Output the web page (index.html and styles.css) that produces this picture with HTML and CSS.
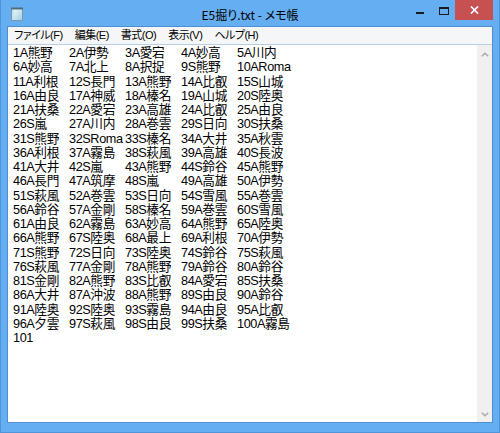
FILE: index.html
```html
<!DOCTYPE html>
<html lang="ja">
<head>
<meta charset="utf-8">
<title>E5掘り.txt - メモ帳</title>
<link rel="stylesheet" href="styles.css">
</head>
<body>
<div class="window">
  <div class="titlebar">
    <div class="tb-left">
      <svg class="app-icon" width="12" height="14" viewBox="0 0 12 14">
        <defs>
          <linearGradient id="pg" x1="0" y1="0" x2="1" y2="1">
            <stop offset="0" stop-color="#f6fcff"/>
            <stop offset="1" stop-color="#9fcde3"/>
          </linearGradient>
        </defs>
        <rect x="0.5" y="1.5" width="11" height="12" fill="url(#pg)" stroke="#7d98a8"/>
        <rect x="0" y="0.5" width="12" height="2" fill="#4f6d80"/>
        <rect x="1" y="3" width="2" height="10" fill="#c6e2ef"/>
      </svg>
    </div>
    <div class="title">E5掘り.txt - メモ帳</div>
    <div class="controls">
      <div class="ctl ctl-min"><span class="min-glyph"></span></div>
      <div class="ctl ctl-max"><span class="max-glyph"></span></div>
      <div class="ctl ctl-close">
        <svg width="9" height="8" viewBox="0 0 9 8">
          <path d="M1 0.5 L8 7.5 M8 0.5 L1 7.5" stroke="#ffffff" stroke-width="1.7" fill="none"/>
        </svg>
      </div>
    </div>
  </div>
  <div class="client">
    <div class="menubar">
      <span class="menu-item">ファイル(F)</span>
      <span class="menu-item">編集(E)</span>
      <span class="menu-item">書式(O)</span>
      <span class="menu-item">表示(V)</span>
      <span class="menu-item">ヘルプ(H)</span>
    </div>
    <div class="editor">
      <div class="text">
        <span>1A熊野</span><span>2A伊勢</span><span>3A愛宕</span><span>4A妙高</span><span>5A川内</span>
        <span>6A妙高</span><span>7A北上</span><span>8A択捉</span><span>9S熊野</span><span>10ARoma</span>
        <span>11A利根</span><span>12S長門</span><span>13A熊野</span><span>14A比叡</span><span>15S山城</span>
        <span>16A由良</span><span>17A神威</span><span>18A榛名</span><span>19A山城</span><span>20S陸奥</span>
        <span>21A扶桑</span><span>22A愛宕</span><span>23A高雄</span><span>24A比叡</span><span>25A由良</span>
        <span>26S嵐</span><span>27A川内</span><span>28A巻雲</span><span>29S日向</span><span>30S扶桑</span>
        <span>31S熊野</span><span>32SRoma</span><span>33S榛名</span><span>34A大井</span><span>35A秋雲</span>
        <span>36A利根</span><span>37A霧島</span><span>38S萩風</span><span>39A高雄</span><span>40S長波</span>
        <span>41A大井</span><span>42S嵐</span><span>43A熊野</span><span>44S鈴谷</span><span>45A熊野</span>
        <span>46A長門</span><span>47A筑摩</span><span>48S嵐</span><span>49A高雄</span><span>50A伊勢</span>
        <span>51S萩風</span><span>52A巻雲</span><span>53S日向</span><span>54S雪風</span><span>55A巻雲</span>
        <span>56A鈴谷</span><span>57A金剛</span><span>58S榛名</span><span>59A巻雲</span><span>60S雪風</span>
        <span>61A由良</span><span>62A霧島</span><span>63A妙高</span><span>64A熊野</span><span>65A陸奥</span>
        <span>66A熊野</span><span>67S陸奥</span><span>68A最上</span><span>69A利根</span><span>70A伊勢</span>
        <span>71S熊野</span><span>72S日向</span><span>73S陸奥</span><span>74S鈴谷</span><span>75S萩風</span>
        <span>76S萩風</span><span>77A金剛</span><span>78A熊野</span><span>79A鈴谷</span><span>80A鈴谷</span>
        <span>81S金剛</span><span>82A熊野</span><span>83S比叡</span><span>84A愛宕</span><span>85S扶桑</span>
        <span>86A大井</span><span>87A沖波</span><span>88A熊野</span><span>89S由良</span><span>90A鈴谷</span>
        <span>91A陸奥</span><span>92S陸奥</span><span>93S霧島</span><span>94A由良</span><span>95A比叡</span>
        <span>96A夕雲</span><span>97S萩風</span><span>98S由良</span><span>99S扶桑</span><span>100A霧島</span>
        <span>101</span>
      </div>
      <div class="scrollbar">
        <svg class="arrow" width="8" height="5" viewBox="0 0 8 5">
          <path d="M0.8 4.2 L4 1.2 L7.2 4.2" stroke="#a8a8a8" stroke-width="1.4" fill="none"/>
        </svg>
        <svg class="arrow" width="8" height="5" viewBox="0 0 8 5">
          <path d="M0.8 0.8 L4 3.8 L7.2 0.8" stroke="#a8a8a8" stroke-width="1.4" fill="none"/>
        </svg>
      </div>
    </div>
  </div>
</div>
</body>
</html>
```

FILE: styles.css
```css
html, body {
  margin: 0;
  padding: 0;
}

body {
  width: 500px;
  height: 433px;
  overflow: hidden;
  background: #ffffff;
  font-family: "Noto Sans CJK JP", "Noto Sans", sans-serif;
}

.window {
  box-sizing: border-box;
  width: 500px;
  height: 433px;
  display: flex;
  flex-direction: column;
  background: #66aef2;
  border: 1px solid #4f95da;
  border-top: 0;
  padding: 0 6px 9px 6px;
}

.titlebar {
  height: 26px;
  flex: none;
  display: grid;
  grid-template-columns: 1fr auto 1fr;
  align-items: start;
}

.tb-left {
  display: flex;
  padding: 7px 0 0 4px;
}

.app-icon {
  display: block;
}

.title {
  font-size: 12px;
  line-height: 16px;
  padding-top: 7px;
  color: #000000;
  white-space: nowrap;
  font-feature-settings: "palt";
}

.controls {
  display: flex;
  justify-content: flex-end;
  align-items: flex-start;
}

.ctl {
  height: 20px;
  display: flex;
  justify-content: center;
}

.ctl-min {
  width: 26px;
  align-items: flex-start;
}

.min-glyph {
  display: block;
  width: 8px;
  height: 2px;
  margin-top: 12px;
  background: #1a1a1a;
}

.ctl-max {
  width: 22px;
  align-items: flex-start;
}

.max-glyph {
  display: block;
  box-sizing: border-box;
  width: 10px;
  height: 8px;
  margin-top: 7px;
  border: 1px solid #1a1a1a;
  border-top-width: 2px;
}

.ctl-close {
  width: 38px;
  background: #c75050;
  align-items: center;
}

.ctl-close svg {
  display: block;
}

.client {
  flex: 1;
  display: flex;
  flex-direction: column;
  border: 1px solid #4f8fcf;
  background: #ffffff;
  min-height: 0;
}

.menubar {
  flex: none;
  height: 17px;
  display: flex;
  align-items: center;
  background: #f5f6f7;
  border-bottom: 1px solid #b8cfe8;
}

.menu-item {
  font-family: "Liberation Sans", "Noto Sans CJK JP", sans-serif;
  font-size: 11px;
  line-height: 17px;
  letter-spacing: -0.5px;
  color: #000000;
  padding: 0 6px;
  white-space: nowrap;
  font-feature-settings: "palt";
}

.editor {
  flex: 1;
  display: flex;
  min-height: 0;
}

.text {
  flex: 1;
  display: grid;
  grid-template-columns: repeat(5, 56px);
  grid-auto-rows: 14.25px;
  align-content: start;
  padding: 1px 0 0 5px;
  font-family: "Liberation Sans", "Noto Sans CJK JP", sans-serif;
  font-size: 12.7px;
  line-height: 14.25px;
  letter-spacing: -0.4px;
  color: #000000;
}

.text span {
  white-space: nowrap;
}

.scrollbar {
  width: 15px;
  flex: none;
  background: #f0f0f0;
  display: flex;
  flex-direction: column;
  justify-content: space-between;
  align-items: center;
  padding: 7px 0 5px 0;
}

.arrow {
  display: block;
}
```
